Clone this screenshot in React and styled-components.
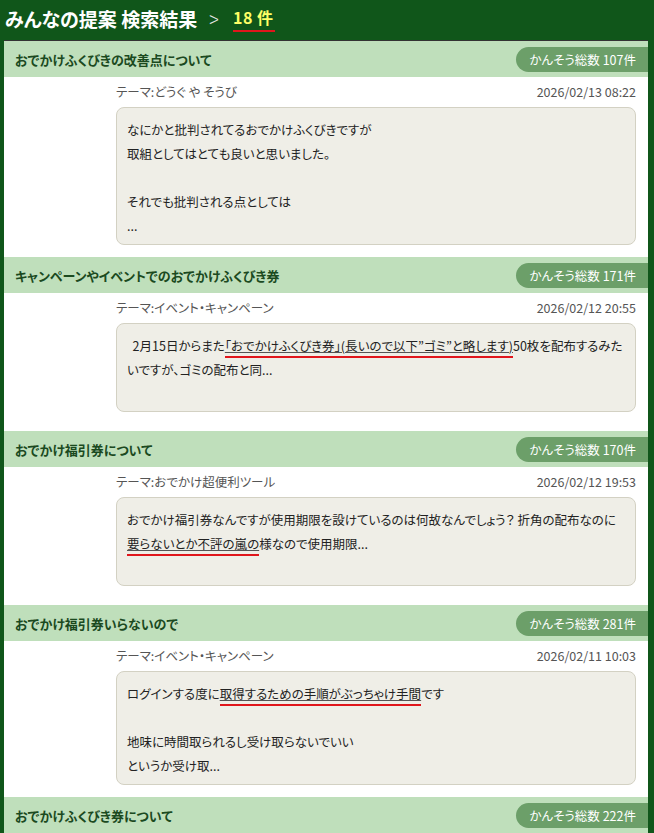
import React from 'react';
import styled, { createGlobalStyle } from 'styled-components';

const GlobalStyle = createGlobalStyle`
  html, body {
    margin: 0;
    padding: 0;
    background: #10561a;
    font-family: "Noto Sans CJK JP", "Noto Sans", sans-serif;
    font-feature-settings: "palt";
  }
  #root {
    height: 833px;
    overflow: hidden;
  }
`;

const PageHeader = styled.header`
  height: 40px;
  display: flex;
  align-items: center;
  padding-left: 5px;
  color: #fff;
  font-size: 19px;
  font-weight: 700;
  box-sizing: border-box;
  padding-bottom: 4px;
`;

const Arrow = styled.span`
  margin: 0 13px 0 11px;
  font-weight: 300;
  color: #e8e8e8;
  font-size: 22px;
  transform: scaleX(0.8);
`;

const Count = styled.span`
  color: #ffff66;
  font-size: 16px;
  letter-spacing: 0.5px;
  border-bottom: 2px solid #e0161c;
  padding: 0 2px 1px 0;
`;

const Panel = styled.main`
  margin: 0 6px 0 4px;
  background: #fff;
  border-top: 1px solid #333;
`;

const SectionHead = styled.div`
  height: 36px;
  background: #bfdfbb;
  display: flex;
  align-items: center;
  justify-content: space-between;
  padding-left: 11px;
`;

const SectionTitle = styled.h2`
  margin: 0;
  font-size: 13px;
  font-weight: 700;
  color: #1b4a1f;
`;

const Badge = styled.span`
  height: 25px;
  line-height: 25px;
  padding: 0 12px 0 13px;
  background: #6c9f69;
  color: #fff;
  font-size: 12.5px;
  border-radius: 13px 0 0 13px;
`;

const Body = styled.div`
  min-height: 138px;
  box-sizing: border-box;
  padding: 6px 12px 12px 112px;
`;

const Meta = styled.div`
  display: flex;
  justify-content: space-between;
  font-size: 12.5px;
  color: #555;
  height: 18px;
  line-height: 18px;
  margin-bottom: 6px;
`;

const Excerpt = styled.div`
  background: #efeee7;
  border: 1px solid #d3d1c3;
  border-radius: 8px;
  min-height: 89px;
  box-sizing: border-box;
  padding: 10px 8px 6px 10px;
  font-size: 12.5px;
  line-height: 24px;
  color: #222;
  white-space: pre-wrap;
`;

const Mark = styled.span`
  text-decoration: underline 1px #555;
  text-underline-offset: 1px;
  border-bottom: 2px solid #e0161c;
  padding-bottom: 1px;
`;

const posts = [
  {
    title: 'おでかけふくびきの改善点について',
    count: 107,
    theme: 'どうぐ や そうび',
    date: '2026/02/13 08:22',
    text: ['なにかと批判されてるおでかけふくびきですが\n取組としてはとても良いと思いました。\n\nそれでも批判される点としては\n...'],
  },
  {
    title: 'キャンペーンやイベントでのおでかけふくびき券',
    count: 171,
    theme: 'イベント・キャンペーン',
    date: '2026/02/12 20:55',
    text: ['  2月15日からまた', { mark: '「おでかけふくびき券」(長いので以下”ゴミ”と略します)' }, '50枚を配布するみた\nいですが、ゴミの配布と同...'],
  },
  {
    title: 'おでかけ福引券について',
    count: 170,
    theme: 'おでかけ超便利ツール',
    date: '2026/02/12 19:53',
    text: ['おでかけ福引券なんですが使用期限を設けているのは何故なんでしょう？ 折角の配布なのに\n', { mark: '要らないとか不評の嵐の' }, '様なので使用期限...'],
  },
  {
    title: 'おでかけ福引券いらないので',
    count: 281,
    theme: 'イベント・キャンペーン',
    date: '2026/02/11 10:03',
    text: ['ログインする度に', { mark: '取得するための手順がぶっちゃけ手間' }, 'です\n\n地味に時間取られるし受け取らないでいい\nというか受け取...'],
  },
  {
    title: 'おでかけふくびき券について',
    count: 222,
    theme: 'イベント・キャンペーン',
    date: '2026/02/10 22:41',
    text: ['...'],
  },
];

function Post({ post }) {
  return (
    <section>
      <SectionHead>
        <SectionTitle>{post.title}</SectionTitle>
        <Badge>かんそう総数 {post.count}件</Badge>
      </SectionHead>
      <Body>
        <Meta>
          <span>テーマ:{post.theme}</span>
          <span>{post.date}</span>
        </Meta>
        <Excerpt>
          {post.text.map((t, i) =>
            typeof t === 'string' ? <React.Fragment key={i}>{t}</React.Fragment> : <Mark key={i}>{t.mark}</Mark>
          )}
        </Excerpt>
      </Body>
    </section>
  );
}

export default function App() {
  return (
    <>
      <GlobalStyle />
      <PageHeader>
        みんなの提案 検索結果
        <Arrow>&gt;</Arrow>
        <Count>18 件</Count>
      </PageHeader>
      <Panel>
        {posts.map((p) => (
          <Post key={p.title + p.date} post={p} />
        ))}
      </Panel>
    </>
  );
}
